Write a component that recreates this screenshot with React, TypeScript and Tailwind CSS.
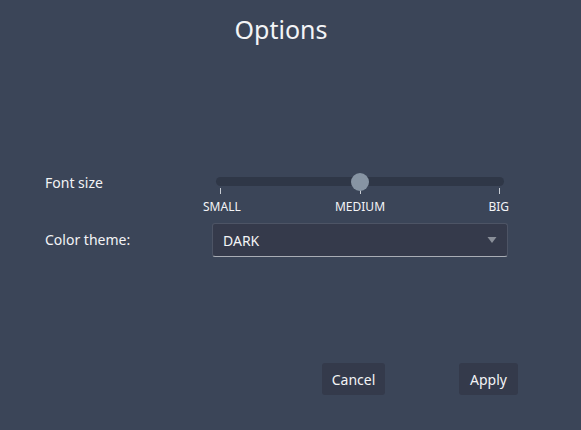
export default function App() {
  return (
    <div
      className="w-[581px] h-[430px] bg-[#3b4558] text-[#f3f4f6] flex flex-col"
      style={{ fontFamily: '"Noto Sans", "Open Sans", sans-serif' }}
    >
      {/* Title */}
      <h1 className="text-center text-[25px] leading-[34px] pt-[12px] pr-[19px] font-normal">Options</h1>

      {/* Form */}
      <div className="mt-[131px] pl-[45px] pr-[73px] grid grid-cols-[167px_1fr] gap-y-[8px] items-start">
        <span className="text-[14px] leading-[20px] -mt-[4px]">Font size</span>
        <div className="flex flex-col">
          {/* Track */}
          <div className="relative mx-[4px] h-[9px] rounded-full bg-[#2f3747]">
            <div className="absolute left-1/2 top-1/2 -translate-x-1/2 -translate-y-1/2 w-[18px] h-[18px] rounded-full bg-[#8794a3]" />
          </div>
          {/* Ticks */}
          <div className="flex justify-between px-[8px] mt-[2px]">
            <div className="w-[1px] h-[6px] bg-[#c8ccd3]" />
            <div className="w-[1px] h-[6px] bg-[#c8ccd3]" />
            <div className="w-[1px] h-[6px] bg-[#c8ccd3]" />
          </div>
          <div className="grid grid-cols-[1fr_auto_1fr] text-[12px] leading-[16px] mt-[5px] -ml-[9px] -mr-[1px]">
            <span className="justify-self-start">SMALL</span>
            <span className="ml-[8px]">MEDIUM</span>
            <span className="justify-self-end">BIG</span>
          </div>
        </div>

        <span className="text-[14px] leading-[20px] pt-[7px]">Color theme:</span>
        <div className="h-[34px] flex items-center justify-between pl-[10px] pr-[10px] bg-[#353a4b] border border-[#4d5465] border-b-[#a9adb5] rounded-[3px]">
          <span className="text-[14px]">DARK</span>
          <svg width="10" height="8" viewBox="0 0 10 8">
            <path d="M0.5 1 L9.5 1 L5 7 Z" fill="#8a8f99" />
          </svg>
        </div>
      </div>

      {/* Buttons */}
      <div className="mt-auto pb-[35px] pr-[63px] flex justify-end gap-[74px]">
        <button className="w-[63px] h-[32px] rounded-[3px] bg-[#343a4b] text-[14px]">Cancel</button>
        <button className="w-[59px] h-[32px] rounded-[3px] bg-[#343a4b] text-[14px]">Apply</button>
      </div>
    </div>
  );
}
